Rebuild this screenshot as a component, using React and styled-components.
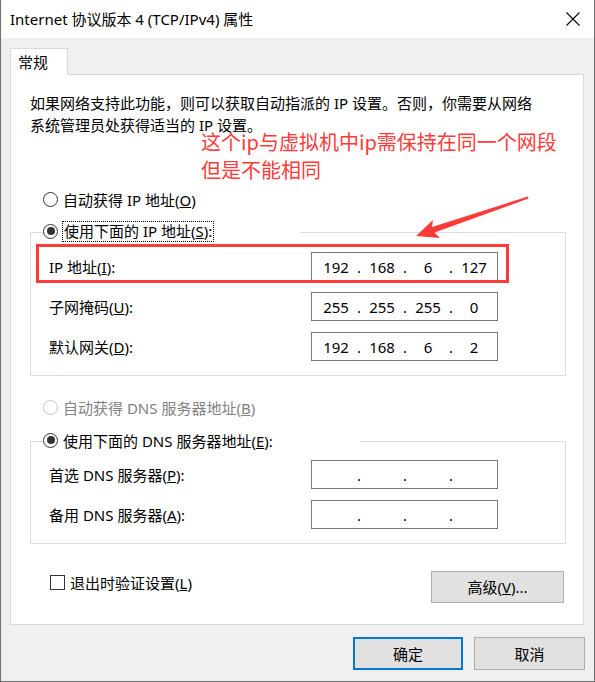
import styled, { createGlobalStyle } from "styled-components";

const GlobalStyle = createGlobalStyle`
  html, body {
    margin: 0;
    padding: 0;
    background: #ffffff;
  }
  body {
    font-family: "Noto Sans", "Noto Sans CJK SC", sans-serif;
    font-size: 15px;
    color: #000000;
  }
  * {
    box-sizing: border-box;
  }
`;

const RED = "#fd3b3b";

const Window = styled.div`
  position: relative;
  width: 595px;
  height: 682px;
  background: #f0f0f0;
  border-left: 1px solid #6f6f6f;
  border-right: 1px solid #6f6f6f;
  border-bottom: 1px solid #6f6f6f;
  display: flex;
  flex-direction: column;
  overflow: hidden;
`;

const TitleBar = styled.div`
  height: 38px;
  flex: none;
  background: #ffffff;
  display: flex;
  align-items: center;
  justify-content: space-between;
  padding-left: 9px;
`;

const TitleText = styled.div`
  font-size: 15px;
  line-height: 20px;
  white-space: nowrap;
`;

const CloseButton = styled.div`
  width: 42px;
  height: 38px;
  display: flex;
  align-items: center;
  justify-content: center;
`;

const Body = styled.div`
  flex: 1;
  display: flex;
  flex-direction: column;
  padding: 10px 0 0 9px;
`;

const Tab = styled.div`
  position: relative;
  z-index: 1;
  width: 58px;
  height: 27px;
  margin-bottom: -1px;
  padding-left: 7px;
  background: #ffffff;
  border: 1px solid #d9d9d9;
  border-bottom: none;
  line-height: 26px;
`;

const Panel = styled.div`
  width: 574px;
  height: 551px;
  background: #ffffff;
  border: 1px solid #d9d9d9;
  padding-top: 19px;
  display: flex;
  flex-direction: column;
`;

const Intro = styled.div`
  display: flex;
  flex-direction: column;
  row-gap: 4px;
  margin-left: 19px;
  line-height: 18px;
  white-space: nowrap;
`;

const RadioRow = styled.div`
  display: flex;
  align-items: center;
  height: 22px;
  margin: ${(p) => p.$top}px 0 0 32px;
  color: ${(p) => (p.$disabled ? "#838383" : "#000000")};
`;

const Radio = styled.span`
  width: 15px;
  height: 15px;
  flex: none;
  border-radius: 50%;
  border: 1px solid ${(p) => (p.$disabled ? "#c4c4c4" : "#333333")};
  background: #ffffff;
  display: flex;
  align-items: center;
  justify-content: center;
  margin-right: 5px;

  &::after {
    content: "";
    display: ${(p) => (p.$checked ? "block" : "none")};
    width: 8px;
    height: 8px;
    border-radius: 50%;
    background: #333333;
  }
`;

const GroupBox = styled.div`
  margin: ${(p) => p.$top}px 17px 0 19px;
  border: 1px solid #dcdcdc;
`;

const Legend = styled.div`
  display: flex;
  align-items: center;
  height: 22px;
  width: ${(p) => p.$width}px;
  margin: -13px 0 0 12px;
  background: #ffffff;
`;

const FocusLabel = styled.span`
  height: 21px;
  line-height: 19px;
  padding: 0 1px;
  margin-left: -1px;
  border: 1px dotted #000000;
  white-space: nowrap;
`;

const FieldGrid = styled.div`
  display: grid;
  grid-template-columns: 262px 187px;
  row-gap: 11px;
  align-items: center;
  padding: ${(p) => p.$top}px 0 14px 18px;
`;

const FieldLabel = styled.span`
  line-height: 22px;
  white-space: nowrap;
`;

const IpField = styled.div`
  height: 29px;
  border: 1px solid #7a7a7a;
  background: #ffffff;
  display: flex;
  align-items: center;
  padding-left: 6px;
`;

const Octet = styled.span`
  width: 36px;
  text-align: center;
  line-height: 20px;
`;

const Dot = styled.span`
  width: 10px;
  text-align: center;
  line-height: 20px;
`;

const BottomRow = styled.div`
  display: flex;
  justify-content: space-between;
  align-items: flex-start;
  margin: 27px 19px 0 39px;
`;

const CheckRow = styled.label`
  display: flex;
  align-items: center;
  height: 22px;
  gap: 5px;
`;

const CheckBox = styled.span`
  width: 15px;
  height: 15px;
  border: 1px solid #333333;
  background: #ffffff;
`;

const Button = styled.div`
  width: ${(p) => p.$width}px;
  height: ${(p) => p.$height}px;
  background: #e1e1e1;
  border: ${(p) => (p.$primary ? "2px solid #0078d7" : "1px solid #adadad")};
  display: flex;
  align-items: center;
  justify-content: center;
  line-height: 20px;
`;

const Footer = styled.div`
  display: flex;
  justify-content: flex-end;
  gap: 11px;
  margin-top: 12px;
  padding-right: 9px;
`;

const Annotation = styled.div`
  position: absolute;
  inset: 0;
  pointer-events: none;
`;

const Note = styled.div`
  position: absolute;
  left: 200px;
  top: 134px;
  display: flex;
  flex-direction: column;
  row-gap: 12px;
  color: ${RED};
  font-family: "Noto Sans CJK SC", sans-serif;
  font-size: 20px;
  line-height: 16px;
  white-space: nowrap;
`;

const Highlight = styled.div`
  position: absolute;
  left: 35px;
  top: 244px;
  width: 473px;
  height: 39px;
  border: 3px solid ${RED};
`;

const ArrowSvg = styled.svg`
  position: absolute;
  left: 400px;
  top: 190px;
`;

function IpAddress({ parts }) {
  return (
    <IpField>
      {parts.map((part, i) => (
        <span key={i} style={{ display: "contents" }}>
          <Octet>{part}</Octet>
          {i < 3 && <Dot>.</Dot>}
        </span>
      ))}
    </IpField>
  );
}

export default function App() {
  return (
    <>
      <GlobalStyle />
      <Window>
        <TitleBar>
          <TitleText>Internet 协议版本 4 (TCP/IPv4) 属性</TitleText>
          <CloseButton>
            <svg width="14" height="14" viewBox="0 0 14 14">
              <path d="M0.5 0.5 L13.5 13.5 M13.5 0.5 L0.5 13.5" stroke="#000" strokeWidth="1.1" fill="none" />
            </svg>
          </CloseButton>
        </TitleBar>

        <Body>
          <Tab>常规</Tab>
          <Panel>
            <Intro>
              <span>如果网络支持此功能，则可以获取自动指派的 IP 设置。否则，你需要从网络</span>
              <span>系统管理员处获得适当的 IP 设置。</span>
            </Intro>

            <RadioRow $top={54}>
              <Radio />
              <span>
                自动获得 IP 地址(<u>O</u>)
              </span>
            </RadioRow>

            <GroupBox $top={22}>
              <Legend $width={257}>
                <Radio $checked />
                <FocusLabel>
                  使用下面的 IP 地址(<u>S</u>):
                </FocusLabel>
              </Legend>
              <FieldGrid $top={10}>
                <FieldLabel>
                  IP 地址(<u>I</u>):
                </FieldLabel>
                <IpAddress parts={["192", "168", "6", "127"]} />
                <FieldLabel>
                  子网掩码(<u>U</u>):
                </FieldLabel>
                <IpAddress parts={["255", "255", "255", "0"]} />
                <FieldLabel>
                  默认网关(<u>D</u>):
                </FieldLabel>
                <IpAddress parts={["192", "168", "6", "2"]} />
              </FieldGrid>
            </GroupBox>

            <RadioRow $top={20} $disabled>
              <Radio $disabled />
              <span>
                自动获得 DNS 服务器地址(<u>B</u>)
              </span>
            </RadioRow>

            <GroupBox $top={23}>
              <Legend $width={317}>
                <Radio $checked />
                <span>
                  使用下面的 DNS 服务器地址(<u>E</u>):
                </span>
              </Legend>
              <FieldGrid $top={9}>
                <FieldLabel>
                  首选 DNS 服务器(<u>P</u>):
                </FieldLabel>
                <IpAddress parts={["", "", "", ""]} />
                <FieldLabel>
                  备用 DNS 服务器(<u>A</u>):
                </FieldLabel>
                <IpAddress parts={["", "", "", ""]} />
              </FieldGrid>
            </GroupBox>

            <BottomRow>
              <CheckRow>
                <CheckBox />
                <span>
                  退出时验证设置(<u>L</u>)
                </span>
              </CheckRow>
              <Button $width={133} $height={32}>
                高级(<u>V</u>)...
              </Button>
            </BottomRow>
          </Panel>

          <Footer>
            <Button $width={110} $height={33} $primary>
              确定
            </Button>
            <Button $width={111} $height={33}>
              取消
            </Button>
          </Footer>
        </Body>

        <Annotation>
          <Note>
            <span>这个ip与虚拟机中ip需保持在同一个网段</span>
            <span>但是不能相同</span>
          </Note>
          <Highlight />
          <ArrowSvg width="140" height="60" viewBox="400 190 140 60">
            <polygon
              points="527,196.5 527.5,198.5 433.5,232.5 439,238 415,236 432,220 431,227"
              fill={RED}
            />
          </ArrowSvg>
        </Annotation>
      </Window>
    </>
  );
}
